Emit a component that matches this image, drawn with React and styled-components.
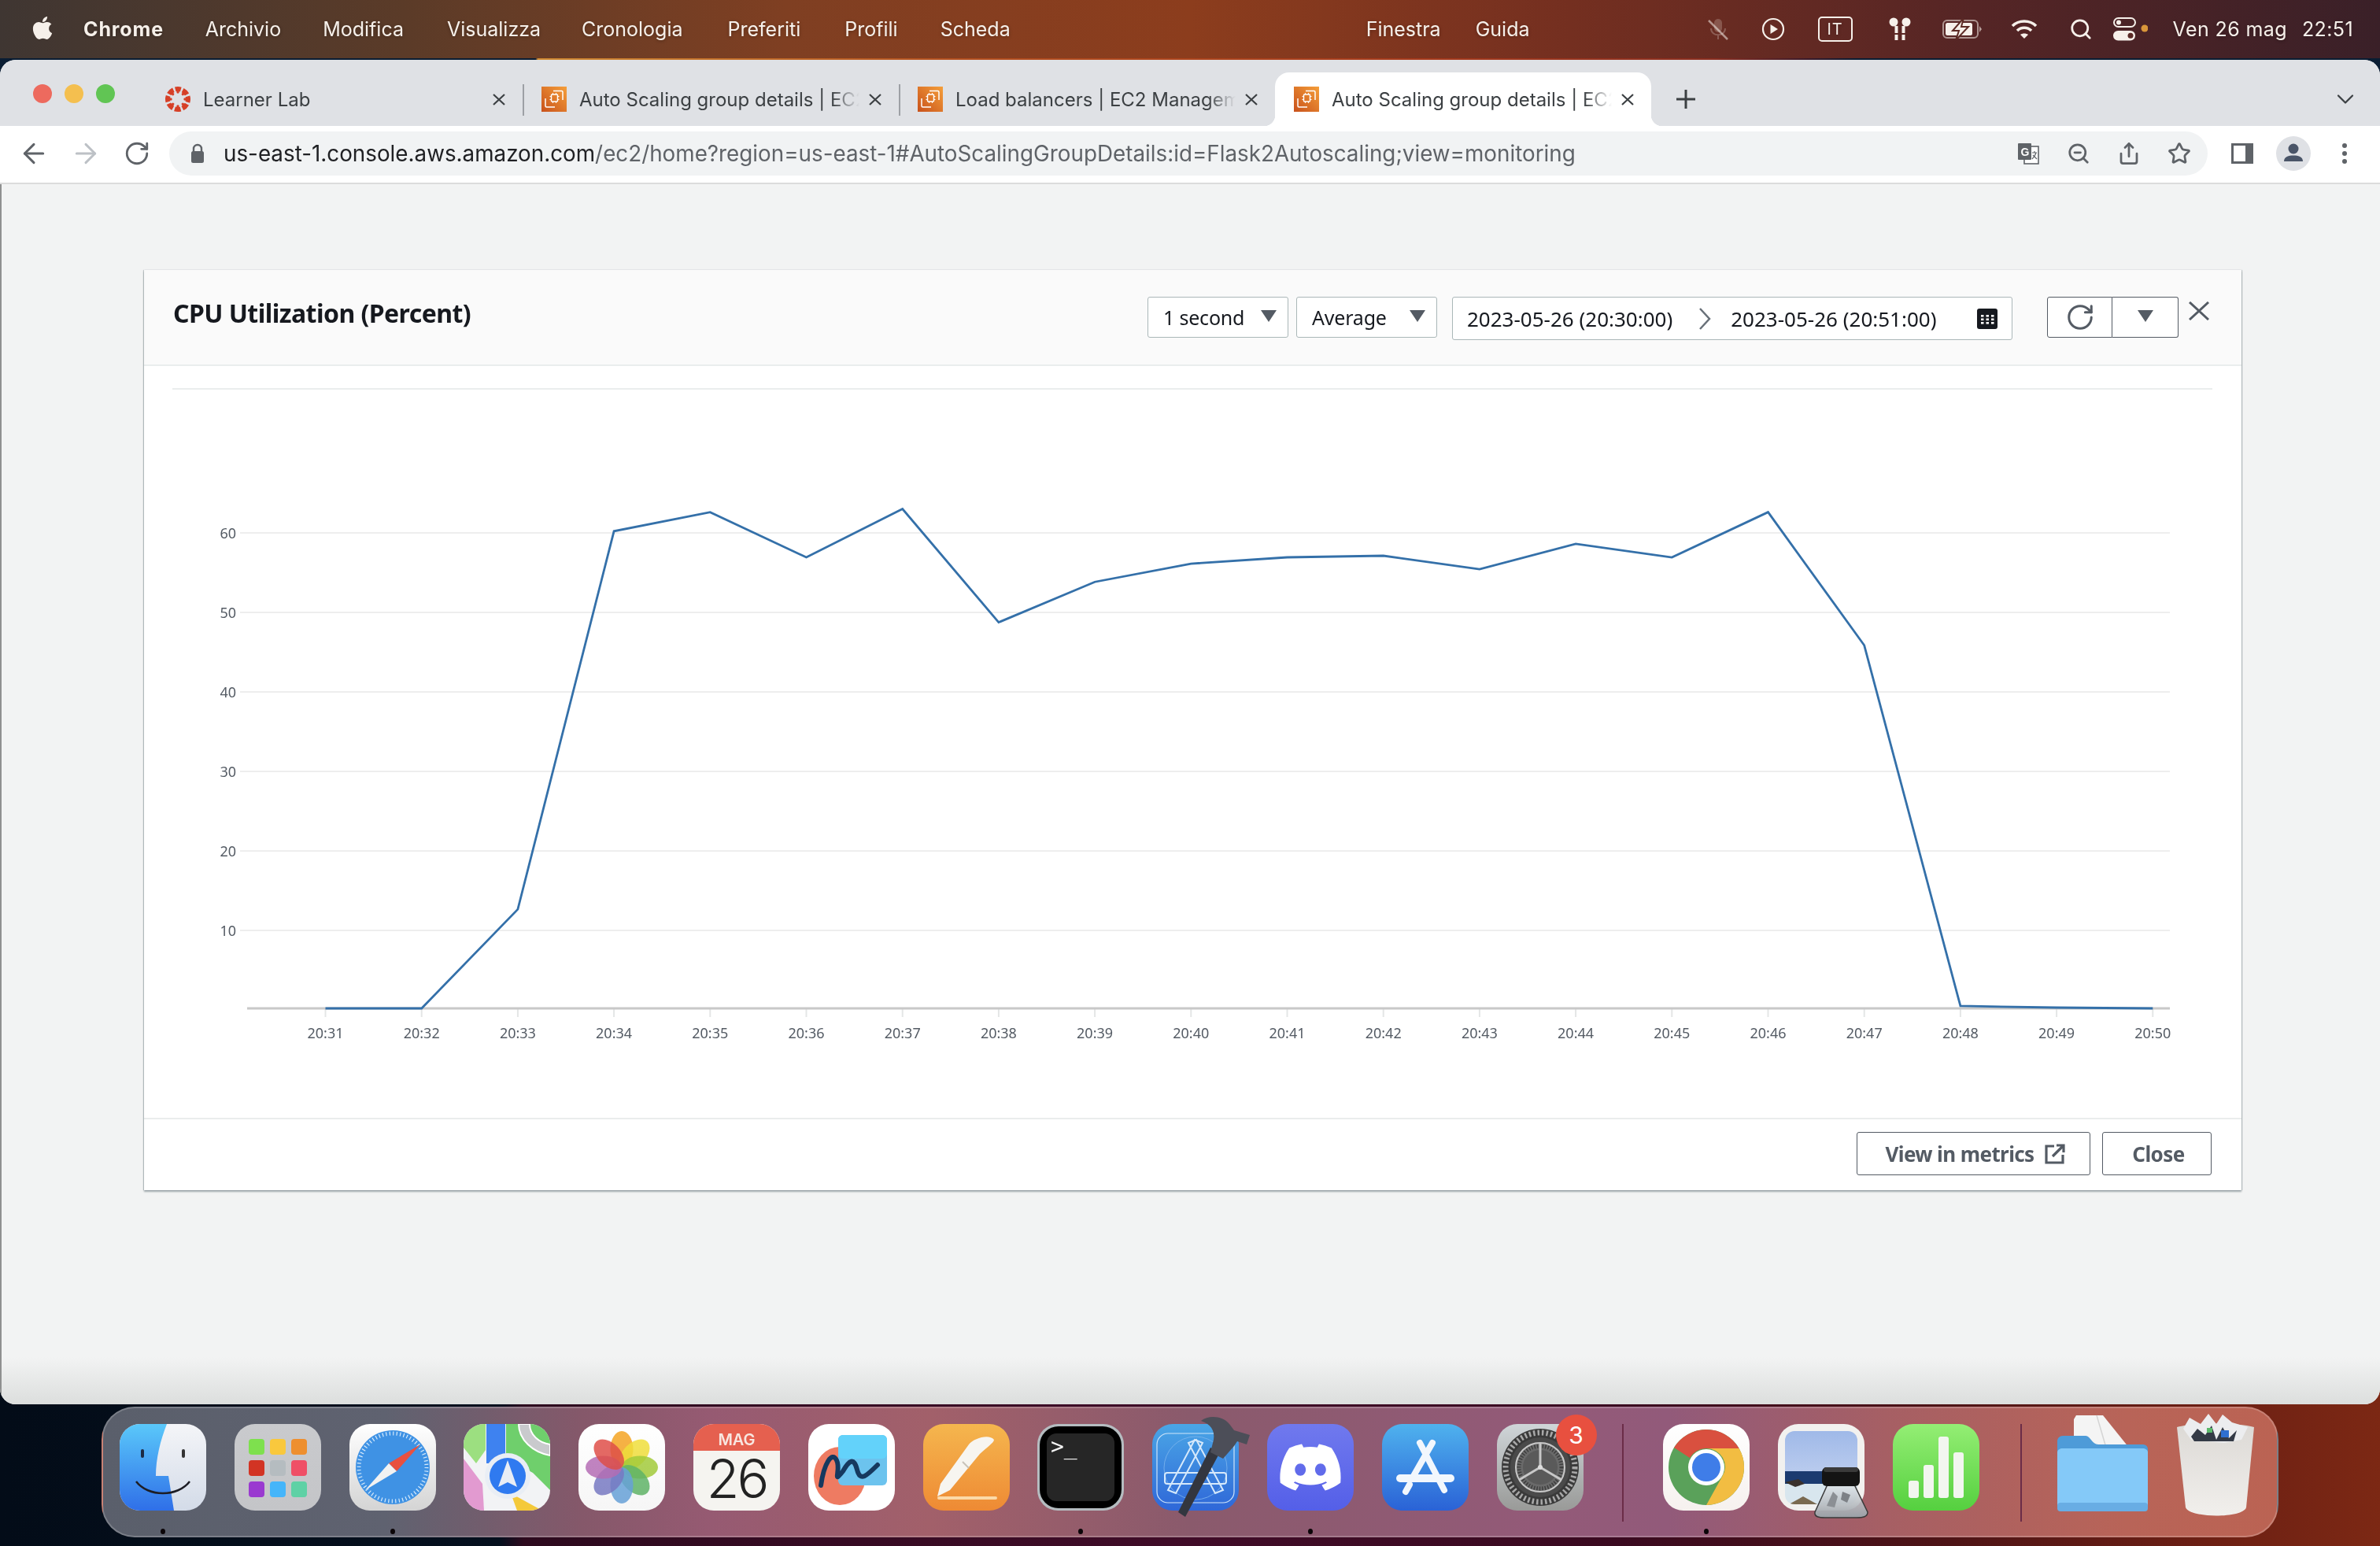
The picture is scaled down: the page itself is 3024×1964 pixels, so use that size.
import React from 'react';
import styled, { createGlobalStyle } from 'styled-components';
import { ArrowLeft, ArrowRight, RotateCw, ZoomOut, Share, Star, ChevronDown, Search } from 'lucide-react';
import { FaApple, FaDiscord } from 'react-icons/fa';

const MENU = [
  ['Archivio', 53], ['Modifica', 55], ['Visualizza', 52], ['Cronologia', 57], ['Preferiti', 56], ['Profili', 54], ['Scheda', 0],
];
const TABS = [
  { title: 'Learner Lab', icon: 'canvas' },
  { title: 'Auto Scaling group details | EC2 Management Console', icon: 'aws', sep: true },
  { title: 'Load balancers | EC2 Management Console', icon: 'aws', sep: true },
  { title: 'Auto Scaling group details | EC2 Management Console', icon: 'aws', active: true },
];
const TIMES = ['20:31', '20:32', '20:33', '20:34', '20:35', '20:36', '20:37', '20:38', '20:39', '20:40', '20:41', '20:42', '20:43', '20:44', '20:45', '20:46', '20:47', '20:48', '20:49', '20:50'];
const CPU = [0, 0, 12.5, 60.2, 62.6, 56.9, 63, 48.7, 53.8, 56.1, 56.9, 57.1, 55.4, 58.6, 56.9, 62.6, 45.8, 0.3, 0.1, 0];
const xAt = (i) => 413.5 + i * 122.2;
const gridY = (v) => 1283 - v * 10.1;
const lineY = (v) => 1281 - v * 10.07;

const Global = createGlobalStyle`
  html, body { margin: 0; padding: 0; }
  body { font-family: "Noto Sans", sans-serif; }
  * { box-sizing: border-box; }
`;

const Desktop = styled.div`
  width: 3024px;
  height: 1964px;
  overflow: hidden;
  background:
    linear-gradient(#0a1d33 0 200px, transparent 200px),
    linear-gradient(90deg, #030c18 0, #05101e 21%, #2d0a1e 22%, #400c28 50%, #3a0a20 68%, #4e1416 82%, #6d2014 93%, #7c2814 100%);
`;

const MenuBar = styled.div`
  height: 74px;
  display: flex;
  align-items: center;
  padding: 0 34px 0 40px;
  color: #f6f0ea;
  font-family: Inter, sans-serif;
  font-size: 25px;
  text-shadow: 0 1px 4px rgba(0, 0, 0, .3);
  background: linear-gradient(90deg, #3f3632 0, #5b3b28 17%, #7f3f22 33%, #8c3d1d 50%, #742f20 66%, #552525 83%, #3a2028 100%);
`;
const AppleSlot = styled.div`
  width: 28px;
  margin-right: 38px;
  display: flex;
  font-size: 33px;
  margin-top: -4px;
`;
const MenuApp = styled.span`
  font-weight: 700;
  letter-spacing: .9px;
  margin-right: 52.6px;
`;
const MenuItem = styled.span`
  margin-right: ${(p) => p.$gap}px;
`;
const CenterMenu = styled.div`
  display: flex;
  gap: 44px;
  margin-left: 452px;
`;
const StatusArea = styled.div`
  margin-left: auto;
  display: flex;
  align-items: center;
`;
const StatusSlot = styled.div`
  width: ${(p) => p.$w}px;
  height: 74px;
  display: flex;
  align-items: center;
  justify-content: center;
`;
const InputBadge = styled.div`
  width: 44px;
  height: 32px;
  border: 2px solid #f6f0ea;
  border-radius: 5px;
  font-size: 20px;
  line-height: 28px;
  text-align: center;
  letter-spacing: 1px;
`;
const Clock = styled.div`
  display: flex;
  gap: 19px;
  margin-left: 22px;
  letter-spacing: .4px;
`;
const GlowLine = styled.div`
  height: 2px;
  background: linear-gradient(90deg, #0a1d33 0 22.5%, #d08a32 22.6%, #b4501f 40%, #a63a1c 60%, #8a2e20 72%, #3a1a2a 76%, #0a1d33 78%);
`;

const Window = styled.div`
  height: 1708px;
  border-radius: 20px;
  overflow: hidden;
  display: flex;
  flex-direction: column;
  background: #f2f3f3;
`;
const TabStrip = styled.div`
  height: 84px;
  flex: none;
  padding-top: 16px;
  display: flex;
  background: #dfe1e5;
`;
const Lights = styled.div`
  display: flex;
  gap: 16px;
  margin: 15px 40px 0 42px;
`;
const Light = styled.div`
  width: 24px;
  height: 24px;
  border-radius: 50%;
  background: ${(p) => p.$c};
`;
const Tab = styled.div`
  position: relative;
  width: 478px;
  height: 68px;
  display: flex;
  align-items: center;
  padding: 0 22px 0 24px;
  color: #3c4043;
  font-family: Inter, sans-serif;
  font-size: 24px;
  border-radius: 18px 18px 0 0;
  background: ${(p) => (p.$active ? '#fff' : 'transparent')};
  &::before {
    content: '';
    display: ${(p) => (p.$sep ? 'block' : 'none')};
    position: absolute;
    left: 0;
    top: 15px;
    width: 2px;
    height: 40px;
    background: #9da0a5;
  }
  &::after {
    content: '';
    display: ${(p) => (p.$active ? 'block' : 'none')};
    position: absolute;
    left: -14px;
    right: -14px;
    bottom: 0;
    height: 14px;
    background:
      radial-gradient(circle at 0 0, transparent 14px, #fff 14.5px) left bottom / 14px 14px no-repeat,
      radial-gradient(circle at 100% 0, transparent 14px, #fff 14.5px) right bottom / 14px 14px no-repeat;
  }
`;
const TabTitle = styled.div`
  flex: 1;
  min-width: 0;
  margin: 0 12px 0 16px;
  white-space: nowrap;
  overflow: hidden;
  mask-image: linear-gradient(90deg, #000 90%, transparent 100%);
`;
const TabClose = styled.div`
  width: 16px;
  flex: none;
  display: flex;
  color: #3c4043;
`;
const NewTab = styled.div`
  width: 24px;
  height: 68px;
  margin-left: 32px;
  display: flex;
  align-items: center;
  color: #3c4043;
`;
const TabMenu = styled.div`
  height: 68px;
  margin: 0 26px 0 auto;
  display: flex;
  align-items: center;
  color: #3c4043;
`;

const Toolbar = styled.div`
  height: 74px;
  flex: none;
  padding: 0 12px 2px 10px;
  display: flex;
  align-items: center;
  background: #fff;
  border-bottom: 2px solid #dcdcdc;
`;
const ToolSlot = styled.div`
  width: ${(p) => p.$w || 65}px;
  height: 56px;
  flex: none;
  display: flex;
  align-items: center;
  justify-content: center;
  color: ${(p) => (p.$off ? '#bdc1c6' : '#5f6368')};
`;
const Omnibox = styled.div`
  width: 2590px;
  height: 56px;
  flex: none;
  margin: 0 11px 0 9px;
  padding: 0 4px 0 26px;
  display: flex;
  align-items: center;
  border-radius: 28px;
  background: #f1f3f4;
`;
const Url = styled.div`
  margin-left: 23px;
  flex: 1;
  font-family: Inter, sans-serif;
  font-size: 27.8px;
  color: #5f6368;
  white-space: nowrap;
  b { font-weight: 400; color: #202124; }
`;

const Page = styled.div`
  flex: 1;
  padding: 109px 176px 0 183px;
  border-left: 2px solid #8f9090;
  background: linear-gradient(#f2f3f3 0 1490px, #dcdedd 100%);
`;
const Panel = styled.div`
  width: 2665px;
  height: 1169px;
  margin-left: -2px;
  display: flex;
  flex-direction: column;
  background: #fff;
  box-shadow: 0 2px 2px rgba(0, 28, 36, .35), 1px 0 1px rgba(0, 28, 36, .18), -1px 0 1px rgba(0, 28, 36, .18);
`;
const PanelHeader = styled.div`
  height: 122px;
  flex: none;
  padding: 34px 41px 0 37px;
  display: flex;
  justify-content: space-between;
  background: #fafafa;
  border-bottom: 2px solid #eaeded;
`;
const Title = styled.h2`
  margin: 0;
  font-size: 32px;
  line-height: 42px;
  font-weight: 700;
  letter-spacing: -.55px;
  color: #16191f;
`;
const Controls = styled.div`
  display: flex;
  align-items: flex-start;
`;
const Select = styled.div`
  width: 179px;
  height: 52px;
  margin-right: ${(p) => p.$mr}px;
  padding: 0 14px 0 19px;
  display: flex;
  align-items: center;
  justify-content: space-between;
  font-size: 25px;
  letter-spacing: -.2px;
  color: #16191f;
  background: #fff;
  border: 1.5px solid #aab7b8;
  border-radius: 3px;
`;
const Caret = styled.div`
  width: 0;
  height: 0;
  margin-top: -3px;
  border-left: 10px solid transparent;
  border-right: 10px solid transparent;
  border-top: 15px solid #545b64;
`;
const DateRange = styled.div`
  width: 712px;
  height: 55px;
  margin-right: 44px;
  padding: 0 18px;
  display: flex;
  align-items: center;
  font-size: 26px;
  color: #16191f;
  background: #fff;
  border: 1.5px solid #aab7b8;
  border-radius: 3px;
`;
const DateArrow = styled.div`
  width: 74px;
  padding-left: 8px;
  display: flex;
  justify-content: center;
  color: #687078;
`;
const CalendarSlot = styled.div`
  margin-left: auto;
  display: flex;
`;
const ButtonGroup = styled.div`
  display: flex;
  height: 52px;
`;
const GroupButton = styled.div`
  width: ${(p) => p.$w}px;
  display: flex;
  align-items: center;
  justify-content: center;
  color: #545b64;
  background: #fff;
  border: 1.5px solid #545b64;
  border-left-width: ${(p) => (p.$join ? 0 : 1.5)}px;
  border-radius: ${(p) => (p.$join ? '0 3px 3px 0' : '3px 0 0 3px')};
`;
const CloseIcon = styled.div`
  width: 26px;
  margin: 6px 0 0 13px;
  display: flex;
  color: #545b64;
`;
const PanelBody = styled.div`
  flex: 1;
  padding-top: 28px;
`;
const ChartRule = styled.div`
  height: 2px;
  margin: 0 37px 0 36px;
  background: #eaeded;
`;
const ChartSvg = styled.svg`
  display: block;
  text { font-family: "Noto Sans", sans-serif; font-size: 18px; fill: #545b64; }
`;
const PanelFooter = styled.div`
  height: 92px;
  flex: none;
  padding: 16px 38px 0 0;
  display: flex;
  justify-content: flex-end;
  gap: 15px;
  border-top: 2px solid #eaeded;
`;
const FooterButton = styled.div`
  width: ${(p) => p.$w}px;
  height: 55px;
  padding-left: 4px;
  display: flex;
  align-items: center;
  justify-content: center;
  gap: 13px;
  font-size: 26px;
  font-weight: 700;
  letter-spacing: -.6px;
  color: #545b64;
  background: #fff;
  border: 1.5px solid #545b64;
  border-radius: 3px;
`;

const Dock = styled.div`
  width: 2766px;
  height: 166px;
  margin: 3px auto 0;
  padding: 20px 0 0 21px;
  display: flex;
  gap: 35.8px;
  border-radius: 42px;
  border: 2px solid rgba(255, 255, 255, .2);
  background: linear-gradient(90deg, #5a5f6b 0, #5f6270 13%, #85586a 22%, #965a72 28%, #a2606a 38%, #8a5a6c 50%, #935a78 66%, #925a7a 72%, #a65f64 82%, #b86458 93%, #bb6353 100%);
`;
const DockItem = styled.div`
  position: relative;
  width: ${(p) => p.$w || 110}px;
  height: 110px;
  flex: none;
  svg { display: block; overflow: visible; }
`;
const RunningDot = styled.div`
  position: absolute;
  left: 50%;
  top: 133px;
  width: 6px;
  height: 7px;
  margin-left: -3px;
  border-radius: 50%;
  background: #0b0508;
`;
const DockBadge = styled.div`
  position: absolute;
  right: -17px;
  top: -12px;
  width: 52px;
  height: 52px;
  border-radius: 50%;
  font-family: Inter, sans-serif;
  font-size: 30px;
  line-height: 52px;
  text-align: center;
  color: #fff;
  background: #e8503f;
`;
const DockSeparator = styled.div`
  width: 2px;
  height: 124px;
  flex: none;
  margin: 0 ${(p) => p.$r}px 0 ${(p) => p.$l}px;
  background: #6b2c48;
`;
const DiscordTile = styled.div`
  width: 110px;
  height: 110px;
  border-radius: 26px;
  display: flex;
  align-items: center;
  justify-content: center;
  color: #fff;
  font-size: 84px;
  background: linear-gradient(#7079ee, #545fe8);
`;

const Tile = ({ id, from, to, children }) => (
  <svg width="110" height="110" viewBox="0 0 110 110">
    <defs>
      <linearGradient id={id} x1="0" y1="0" x2="0" y2="1">
        <stop offset="0" stopColor={from} />
        <stop offset="1" stopColor={to} />
      </linearGradient>
    </defs>
    <rect width="110" height="110" rx="26" fill={`url(#${id})`} />
    {children}
  </svg>
);

const Finder = () => (
  <svg width="110" height="110" viewBox="0 0 110 110">
    <defs>
      <linearGradient id="fb" x1="0" y1="0" x2="0" y2="1"><stop offset="0" stopColor="#5ac8fa" /><stop offset="1" stopColor="#2f6fe8" /></linearGradient>
      <linearGradient id="fw" x1="0" y1="0" x2="0" y2="1"><stop offset="0" stopColor="#f4f5f8" /><stop offset="1" stopColor="#d3dbe8" /></linearGradient>
      <clipPath id="fc"><rect width="110" height="110" rx="26" /></clipPath>
    </defs>
    <g clipPath="url(#fc)">
      <rect width="110" height="110" fill="url(#fw)" />
      <path d="M0 0H60C52 20 46 44 46 66H62L69 110H0Z" fill="url(#fb)" />
    </g>
    <rect x="27" y="32" width="4" height="11" rx="2" fill="#1c2a44" />
    <rect x="79" y="32" width="4" height="11" rx="2" fill="#333" />
    <path d="M21 73C36 93 74 93 89 73" fill="none" stroke="#1d1d24" strokeWidth="2.5" />
  </svg>
);

const Launchpad = () => {
  const colours = ['#7ee04e', '#f9c83d', '#ee8f2e', '#d23424', '#b5bcc0', '#ef4f66', '#9a3ad0', '#45b5fa', '#5fd1a5'];
  return (
    <Tile id="lp" from="#c9cacd" to="#c4c5c8">
      {colours.map((c, i) => (
        <rect key={c} x={18 + (i % 3) * 27} y={19 + Math.floor(i / 3) * 27} width="20" height="20" rx="4" fill={c} />
      ))}
    </Tile>
  );
};

const Safari = () => (
  <Tile id="sf" from="#ffffff" to="#d4d4d4">
    <circle cx="55" cy="55" r="47" fill="#3f92e4" />
    <circle cx="55" cy="55" r="43" fill="none" stroke="#d8ebfb" strokeWidth="5" strokeDasharray="1.2 3.3" />
    <path d="M90 26 50 50 60 60Z" fill="#e8503f" />
    <path d="M20 84 50 50 60 60Z" fill="#f2f2f2" />
  </Tile>
);

const Maps = () => (
  <svg width="110" height="110" viewBox="0 0 110 110">
    <defs><clipPath id="mc"><rect width="110" height="110" rx="26" /></clipPath></defs>
    <g clipPath="url(#mc)">
      <rect width="110" height="110" fill="#f2f3f5" />
      <path d="M0 0H28V33L16 50 0 30Z" fill="#9cdf80" />
      <path d="M54 0H110V84L88 62 54 44Z" fill="#6fcf6c" />
      <path d="M70 0C70 20 88 36 110 40V26C96 24 84 14 84 0Z" fill="#c9cacd" stroke="#fff" strokeWidth="2" />
      <path d="M0 44 24 76 26 110H6L0 108Z" fill="#e29ad0" />
      <path d="M60 88 68 110H100Z" fill="#f4c93a" />
      <rect x="29" y="0" width="24" height="50" fill="#3e82f0" />
      <circle cx="56" cy="66" r="29" fill="#e9eef5" />
      <circle cx="56" cy="66" r="23" fill="#2f7af0" />
      <path d="M56 46 68 80 56 74 44 80Z" fill="#e8edf5" />
    </g>
  </svg>
);

const Photos = () => {
  const petals = ['#f6a623', '#f2e03c', '#a6cf3c', '#62b96a', '#6aa6de', '#7a7cc8', '#b870b8', '#e2504a'];
  return (
    <Tile id="ph" from="#ffffff" to="#f6f6f6">
      <g style={{ mixBlendMode: 'multiply' }}>
        {petals.map((c, i) => (
          <ellipse key={c} cx="55" cy="32" rx="14.5" ry="23" fill={c} opacity=".85" transform={`rotate(${i * 45} 55 55)`} />
        ))}
      </g>
    </Tile>
  );
};

const CalendarApp = () => (
  <svg width="110" height="110" viewBox="0 0 110 110">
    <defs><clipPath id="cc"><rect width="110" height="110" rx="26" /></clipPath></defs>
    <g clipPath="url(#cc)">
      <rect width="110" height="110" fill="#f5f4f0" />
      <rect width="110" height="34" fill="#e5604f" />
    </g>
    <text x="55" y="27" textAnchor="middle" fontFamily="Inter, sans-serif" fontWeight="600" fontSize="20" fill="#f8e6e0">MAG</text>
    <text x="55" y="94" textAnchor="middle" fontFamily="Inter, sans-serif" fontWeight="300" fontSize="68" letterSpacing="-3" fill="#222">26</text>
  </svg>
);

const Freeform = () => (
  <Tile id="ff" from="#ffffff" to="#ffffff">
    <ellipse cx="40" cy="66" rx="33" ry="37" fill="#ee7b62" />
    <rect x="38" y="14" width="62" height="64" rx="6" fill="#6cc3ee" />
    <rect x="38" y="14" width="62" height="30" rx="6" fill="#63d2fa" />
    <path d="M16 78C20 50 30 34 36 46 42 58 30 78 44 60 52 46 58 42 62 58 66 74 74 66 88 52" fill="none" stroke="#16395f" strokeWidth="6" strokeLinecap="round" />
  </Tile>
);

const Pages = () => (
  <Tile id="pg" from="#f5b64e" to="#ee8a34">
    <rect x="18" y="92" width="76" height="4" rx="2" fill="#fbd9a8" />
    <path d="M18 92 22 76 58 26C64 18 84 12 90 20 90 24 78 32 72 38L34 84Z" fill="#f7f5f0" />
    <path d="M50 48 58 56" stroke="#c8c2b8" strokeWidth="2" />
  </Tile>
);

const Terminal = () => (
  <svg width="110" height="110" viewBox="0 0 110 110">
    <rect width="110" height="110" rx="26" fill="#b5bcc0" />
    <rect x="3" y="3" width="104" height="104" rx="24" fill="#000" />
    <rect x="12" y="12" width="86" height="86" rx="12" fill="#262626" />
    <text x="17" y="38" fontFamily="'DejaVu Sans Mono', monospace" fontSize="28" fill="#f4f4f4">&gt;_</text>
  </svg>
);

const Xcode = () => (
  <Tile id="xc" from="#4aa6e6" to="#2f67d8">
    <rect x="6" y="12" width="98" height="88" rx="14" fill="none" stroke="#cfe5fa" strokeWidth="1.2" />
    <circle cx="55" cy="56" r="40" fill="none" stroke="#7fb6ee" strokeWidth=".8" />
    <g fill="none" stroke="#d6e9fb" strokeWidth="2">
      <path d="M46 24 56 20 90 84 80 88Z" />
      <path d="M64 24 54 20 20 84 30 88Z" />
      <rect x="16" y="62" width="78" height="14" rx="3" />
    </g>
    <path d="M33 112 42 118 86 36 74 30Z" fill="#33363f" />
    <path d="M62 -4C72 -12 90 -10 98 0L104 8 124 14 120 26 108 22 104 28 90 44 74 36 78 20C80 8 74 0 62 -4Z" fill="#4c4e58" />
  </Tile>
);

const AppStore = () => (
  <Tile id="as" from="#4fb2ee" to="#2a62d6">
    <g stroke="#f2f7fd" strokeLinecap="round" fill="none">
      <path d="M48 24 79 84" strokeWidth="8" />
      <path d="M64 24 40 66" strokeWidth="8" />
      <path d="M23 69H87" strokeWidth="10" />
      <path d="M30 86 35 77" strokeWidth="8" />
    </g>
  </Tile>
);

const SystemSettings = () => (
  <Tile id="ss" from="#cfd5d8" to="#999a98">
    <circle cx="55" cy="55" r="49" fill="#3a3a3a" />
    <circle cx="55" cy="55" r="44" fill="none" stroke="#a8a8a8" strokeWidth="7" strokeDasharray="2.500 3" />
    <circle cx="55" cy="55" r="38" fill="#4a4a4a" />
    <circle cx="55" cy="55" r="32" fill="#6a6a6a" />
    <circle cx="55" cy="55" r="27" fill="none" stroke="#3e3e3e" strokeWidth="5" strokeDasharray="1.500 2" />
    <circle cx="55" cy="55" r="22" fill="#5a5a5a" />
    <g stroke="#c8c8c8" strokeWidth="3">
      <circle cx="55" cy="55" r="31" fill="none" strokeWidth="2" />
      <path d="M55 55V24" />
      <path d="M55 55 82 71" />
      <path d="M55 55 28 71" />
    </g>
    <circle cx="55" cy="55" r="3" fill="#ddd" />
  </Tile>
);

const ChromeApp = () => (
  <Tile id="ch" from="#ffffff" to="#f6f1ee">
    <circle cx="55" cy="55" r="48" fill="#5aa15a" />
    <path d="M55 7A48 48 0 0 1 96.600 31H55A24 24 0 0 0 34 43L14 30A48 48 0 0 1 55 7Z" fill="#d9503f" />
    <path d="M96.600 31A48 48 0 0 1 55 103L75 67A24 24 0 0 0 76 43 24 24 0 0 0 55 31Z" fill="#f2bd42" />
    <circle cx="55" cy="55" r="23" fill="#fff" />
    <circle cx="55" cy="55" r="18" fill="#3f7de8" />
  </Tile>
);

const Preview = () => (
  <svg width="110" height="110" viewBox="0 0 110 110">
    <defs>
      <clipPath id="pc"><rect x="9" y="9" width="92" height="93" rx="12" /></clipPath>
      <linearGradient id="pv" x1="0" y1="0" x2="0" y2="1"><stop offset="0" stopColor="#dfe3e6" stopOpacity=".7" /><stop offset="1" stopColor="#9aa0a6" /></linearGradient>
      <linearGradient id="ps" x1="0" y1="0" x2="0" y2="1"><stop offset="0" stopColor="#9fb9e8" /><stop offset="1" stopColor="#b9cbee" /></linearGradient>
    </defs>
    <rect width="110" height="110" rx="26" fill="#f2f1ef" />
    <g clipPath="url(#pc)">
      <rect x="9" y="9" width="92" height="52" fill="url(#ps)" />
      <rect x="9" y="60" width="92" height="16" fill="#1b3b70" />
      <rect x="9" y="76" width="92" height="26" fill="#d8e6ee" />
      <path d="M9 74 26 70 34 76 22 80Z" fill="#39312c" />
      <path d="M14 102 32 92 50 102Z" fill="#7a6a50" />
    </g>
    <path d="M63 77H97L114 112C114 118 108 119 100 119H60C52 119 46 118 47 112Z" fill="url(#pv)" stroke="#3a3a3a" strokeWidth="1.500" />
    <path d="M62 104 70 86 76 92 72 106Z" fill="#8b8f94" />
    <path d="M82 86 92 90 88 100 80 96Z" fill="#7d8186" />
    <rect x="56" y="55" width="48" height="24" rx="6" fill="#141414" />
    <rect x="58" y="55" width="44" height="6" rx="3" fill="#3a3a3a" />
  </svg>
);

const Numbers = () => (
  <Tile id="nu" from="#94ee74" to="#55d03f">
    <rect x="20" y="72" width="13" height="22" rx="3" fill="#f2f6ef" />
    <rect x="39" y="52" width="13" height="42" rx="3" fill="#f2f6ef" />
    <rect x="58" y="16" width="13" height="78" rx="3" fill="#f2f6ef" />
    <rect x="77" y="36" width="13" height="58" rx="3" fill="#f2f6ef" />
  </Tile>
);

const Folder = () => (
  <svg width="115" height="110" viewBox="0 0 115 110">
    <path d="M21 -6 24 -11H58L91 30V40H21Z" fill="#f4f4f4" />
    <path d="M50 -11 62 30" stroke="#d4d4d4" strokeWidth="1.500" />
    <path d="M0 22C0 18 3 15 7 15H36C42 15 44 26 52 26H108C112 26 115 28 115 32V104C115 108 112 111 108 111H8C4 111 0 108 0 104Z" fill="#4e9bd8" />
    <path d="M0 36C0 33 3 31 7 31H108C112 31 115 33 115 36V104C115 108 112 111 108 111H8C4 111 0 108 0 104Z" fill="#84c9f8" />
    <rect y="100" width="115" height="11" rx="4" fill="#68ade4" />
  </svg>
);

const Trash = () => (
  <svg width="100" height="110" viewBox="0 0 100 110">
    <defs>
      <linearGradient id="tr" x1="0" y1="0" x2="0" y2="1"><stop offset="0" stopColor="#dcd9d5" /><stop offset="1" stopColor="#f1efec" /></linearGradient>
    </defs>
    <path d="M0 4C20 -2 78 -2 98 4L88 106C84 120 16 120 11 106Z" fill="url(#tr)" />
    <path d="M8 6 16 -8 30 0 40 -13 50 0 58 -12 70 -2 90 4 82 20 60 24 18 20Z" fill="#ecedef" />
    <path d="M18 16 26 6 36 14 44 2 50 20 58 4 66 18 76 8 72 22H22Z" fill="#343a46" />
    <rect x="56" y="8" width="10" height="9" fill="#2f6fd0" />
    <rect x="38" y="5" width="7" height="6" fill="#5ab86a" />
  </svg>
);

const AwsFavicon = () => (
  <svg width="32" height="32" viewBox="0 0 32 32">
    <defs>
      <linearGradient id="aw" x1="0" y1="1" x2="1" y2="0"><stop offset="0" stopColor="#c8511b" /><stop offset="1" stopColor="#f59f3a" /></linearGradient>
    </defs>
    <rect width="32" height="32" fill="url(#aw)" />
    <g fill="none" stroke="#fff" strokeWidth="1.500">
      <rect x="12.500" y="10" width="8" height="9" rx="1" />
      <path d="M15 5.500H25.500A1.500 1.500 0 0 1 27 7V17M17 26H6.500A1.500 1.500 0 0 1 5 24.500V15" />
      <path d="M14.500 8V10M18.500 8V10M14.500 19V21M18.500 19V21M10.500 12.500H12.500M10.500 16.500H12.500M20.500 12.500H22.500M20.500 16.500H22.500" strokeWidth="1" />
    </g>
  </svg>
);

const CanvasFavicon = () => (
  <svg width="32" height="32" viewBox="0 0 32 32" fill="#d64027">
    <circle cx="16" cy="16" r="13" fill="none" stroke="#d64027" strokeWidth="6" strokeDasharray="7.700 2.510" strokeDashoffset="3.850" transform="rotate(-90 16 16)" />
    {[0, 45, 90, 135, 180, 225, 270, 315].map((a) => (
      <circle key={a} cx="16" cy="7" r="1.700" transform={`rotate(${a} 16 16)`} />
    ))}
  </svg>
);

const Cross = ({ w, h, weight }) => (
  <svg width={w} height={h} viewBox={`0 0 ${w} ${h}`} fill="none" stroke="currentColor" strokeWidth={weight}>
    <path d={`M1 1 ${w - 1} ${h - 1}M${w - 1} 1 1 ${h - 1}`} />
  </svg>
);

const PlusIcon = () => (
  <svg width="24" height="24" viewBox="0 0 24 24" stroke="currentColor" strokeWidth="3">
    <path d="M12 0V24M0 12H24" />
  </svg>
);

const StatusIcons = {
  Mute: () => (
    <svg width="26" height="28" viewBox="0 0 26 28" fill="none">
      <rect x="8" y="1" width="10" height="17" rx="5" fill="#f6f0ea" opacity=".22" />
      <path d="M4 13C4 24 22 24 22 13M13 22V27" stroke="#f6f0ea" strokeOpacity=".25" strokeWidth="2" />
      <path d="M1 3 25 27" stroke="#f6f0ea" strokeOpacity=".55" strokeWidth="2.500" />
    </svg>
  ),
  Play: () => (
    <svg width="30" height="30" viewBox="0 0 30 30">
      <circle cx="15" cy="15" r="13" fill="none" stroke="#f6f0ea" strokeWidth="2.200" />
      <path d="M11.500 9 21 15 11.500 21Z" fill="#f6f0ea" />
    </svg>
  ),
  Pods: () => (
    <svg width="28" height="30" viewBox="0 0 28 30" fill="#f6f0ea">
      <circle cx="6" cy="6" r="5.500" /><circle cx="22" cy="6" r="5.500" />
      <rect x="7.500" y="11" width="4" height="9" /><rect x="16.500" y="11" width="4" height="9" />
      <rect x="7.500" y="22" width="4" height="7" /><rect x="16.500" y="22" width="4" height="7" />
    </svg>
  ),
  Battery: () => (
    <svg width="50" height="26" viewBox="0 0 50 26">
      <rect x="1" y="2" width="44" height="22" rx="5" fill="none" stroke="#f6f0ea" strokeOpacity=".55" strokeWidth="2" />
      <rect x="4" y="5" width="34" height="16" rx="2.500" fill="#f6f0ea" />
      <path d="M27 -1 13 15H21L17 27 33 10H24Z" fill="#f6f0ea" stroke="#5c2a24" strokeWidth="2" />
      <path d="M47 9 50 13 47 17Z" fill="#f6f0ea" fillOpacity=".6" />
    </svg>
  ),
  Wifi: () => (
    <svg width="34" height="26" viewBox="0 0 34 26" fill="none" stroke="#f6f0ea" strokeWidth="3.600">
      <path d="M2 9C10 1 24 1 32 9" />
      <path d="M8 15C13 10 21 10 26 15" />
      <path d="M17 25 12 20C15 18 19 18 22 20Z" fill="#f6f0ea" stroke="none" />
    </svg>
  ),
  Control: () => (
    <svg width="44" height="30" viewBox="0 0 44 30">
      <rect x="1" y="1" width="27" height="11" rx="5.500" fill="none" stroke="#f6f0ea" strokeWidth="2" />
      <circle cx="7" cy="6.500" r="3" fill="#f6f0ea" />
      <rect x="0" y="17" width="28" height="12.500" rx="6.200" fill="#f6f0ea" />
      <circle cx="22" cy="23.200" r="3.500" fill="#5a2a26" />
      <circle cx="40" cy="14" r="4.500" fill="#d9963a" />
    </svg>
  ),
};

const Translate = () => (
  <svg width="30" height="30" viewBox="0 0 30 30">
    <rect x="10" y="6" width="18" height="22" fill="#fff" stroke="#5f6368" strokeWidth="1.600" />
    <rect x="2" y="2" width="17" height="21" rx="1" fill="#5f6368" />
    <text x="5.500" y="18" fontFamily="'Liberation Sans', sans-serif" fontWeight="700" fontSize="14" fill="#fff">G</text>
    <path d="M20 14H26M23 12V14M25 14C24 18 22 20 20 22M21 17 26 22" stroke="#5f6368" strokeWidth="1.200" fill="none" />
  </svg>
);

const SidePanel = () => (
  <svg width="28" height="28" viewBox="0 0 28 28">
    <path fillRule="evenodd" d="M0 1H28V27H0ZM3 4V24H18V4Z" fill="#5f6368" />
  </svg>
);

const Avatar = () => (
  <svg width="44" height="44" viewBox="0 0 44 44">
    <circle cx="22" cy="22" r="22" fill="#dfe1e5" />
    <circle cx="22" cy="16" r="6.500" fill="#4a5568" />
    <path d="M10 32C10 26 16 24.500 22 24.500S34 26 34 32Z" fill="#4a5568" />
  </svg>
);

const Kebab = () => (
  <svg width="8" height="28" viewBox="0 0 8 28" fill="#5f6368">
    <circle cx="4" cy="4" r="3" /><circle cx="4" cy="14" r="3" /><circle cx="4" cy="24" r="3" />
  </svg>
);

const LockIcon = () => (
  <svg width="20" height="26" viewBox="0 0 20 26">
    <path d="M5 11V7A5 5 0 0 1 15 7V11" fill="none" stroke="#5f6368" strokeWidth="2.400" />
    <rect x="2" y="10" width="16" height="15" rx="2.500" fill="#5f6368" />
  </svg>
);

const CalendarIcon = () => (
  <svg width="26" height="26" viewBox="0 0 26 26">
    <rect width="26" height="26" rx="3" fill="#16191f" />
    <g fill="#fff">
      {[8, 12.5, 17].map((y) => [5, 11.5, 18].map((x) => <rect key={`${x}${y}`} x={x} y={y} width="3.500" height="2.600" />))}
    </g>
  </svg>
);

const ExternalIcon = () => (
  <svg width="26" height="26" viewBox="0 0 26 26" fill="none" stroke="#545b64" strokeWidth="3.200">
    <path d="M12 3H2V24H23V14" />
    <path d="M10 16 23 3M15 2H24V11" />
  </svg>
);

const CpuChart = () => (
  <ChartSvg width="2665" height="923" viewBox="183 495 2665 923">
    {[10, 20, 30, 40, 50, 60].map((v) => (
      <g key={v}>
        <line x1="305" x2="2757" y1={gridY(v)} y2={gridY(v)} stroke="#eeeeee" strokeWidth="2" />
        <text x="300" y={gridY(v) + 6.500} textAnchor="end">{v}</text>
      </g>
    ))}
    {TIMES.map((t, i) => (
      <g key={t}>
        <line x1={xAt(i)} x2={xAt(i)} y1="1281" y2="1292" stroke="#e4e6e6" strokeWidth="2" />
        <text x={xAt(i)} y="1319" textAnchor="middle">{t}</text>
      </g>
    ))}
    <line x1="314" x2="2757" y1="1281" y2="1281" stroke="#c8c8c8" strokeWidth="3" />
    <polyline
      fill="none"
      stroke="#3470a9"
      strokeWidth="2.800"
      points={CPU.map((v, i) => `${xAt(i)},${lineY(v)}`).join(' ')}
    />
  </ChartSvg>
);

export default function App() {
  return (
    <Desktop>
      <Global />
      <MenuBar>
        <AppleSlot><FaApple /></AppleSlot>
        <MenuApp>Chrome</MenuApp>
        {MENU.map(([label, gap]) => <MenuItem key={label} $gap={gap}>{label}</MenuItem>)}
        <CenterMenu>
          <span>Finestra</span>
          <span>Guida</span>
        </CenterMenu>
        <StatusArea>
          <StatusSlot $w={66}><StatusIcons.Mute /></StatusSlot>
          <StatusSlot $w={74}><StatusIcons.Play /></StatusSlot>
          <StatusSlot $w={84}><InputBadge>IT</InputBadge></StatusSlot>
          <StatusSlot $w={81}><StatusIcons.Pods /></StatusSlot>
          <StatusSlot $w={76}><StatusIcons.Battery /></StatusSlot>
          <StatusSlot $w={82}><StatusIcons.Wifi /></StatusSlot>
          <StatusSlot $w={63}><Search size={30} strokeWidth={2.2} /></StatusSlot>
          <StatusSlot $w={63}><StatusIcons.Control /></StatusSlot>
          <Clock><span>Ven 26 mag</span><span>22:51</span></Clock>
        </StatusArea>
      </MenuBar>
      <GlowLine />
      <Window>
        <TabStrip>
          <Lights>
            <Light $c="#ed6a5e" />
            <Light $c="#f4bf4f" />
            <Light $c="#61c554" />
          </Lights>
          {TABS.map((t, i) => (
            <Tab key={i} $active={t.active} $sep={t.sep}>
              {t.icon === 'aws' ? <AwsFavicon /> : <CanvasFavicon />}
              <TabTitle>{t.title}</TabTitle>
              <TabClose><Cross w={16} h={15} weight={2.2} /></TabClose>
            </Tab>
          ))}
          <NewTab><PlusIcon /></NewTab>
          <TabMenu><ChevronDown size={36} strokeWidth={1.5} /></TabMenu>
        </TabStrip>
        <Toolbar>
          <ToolSlot $w={66}><ArrowLeft size={40} strokeWidth={1.8} /></ToolSlot>
          <ToolSlot $w={66} $off><ArrowRight size={40} strokeWidth={1.8} /></ToolSlot>
          <ToolSlot $w={64}><RotateCw size={34} strokeWidth={2} /></ToolSlot>
          <Omnibox>
            <LockIcon />
            <Url><b>us-east-1.console.aws.amazon.com</b>/ec2/home?region=us-east-1#AutoScalingGroupDetails:id=Flask2Autoscaling;view=monitoring</Url>
            <ToolSlot $w={64}><Translate /></ToolSlot>
            <ToolSlot $w={64}><ZoomOut size={30} strokeWidth={2.2} /></ToolSlot>
            <ToolSlot $w={64}><Share size={30} strokeWidth={2.2} /></ToolSlot>
            <ToolSlot $w={64}><Star size={30} strokeWidth={2.2} /></ToolSlot>
          </Omnibox>
          <ToolSlot><SidePanel /></ToolSlot>
          <ToolSlot><Avatar /></ToolSlot>
          <ToolSlot><Kebab /></ToolSlot>
        </Toolbar>
        <Page>
          <Panel>
            <PanelHeader>
              <Title>CPU Utilization (Percent)</Title>
              <Controls>
                <Select $mr={10}>1 second<Caret /></Select>
                <Select $mr={19}>Average<Caret /></Select>
                <DateRange>
                  <span>2023-05-26 (20:30:00)</span>
                  <DateArrow>
                    <svg width="16" height="28" viewBox="0 0 16 28" fill="none" stroke="currentColor" strokeWidth="2.500"><path d="M2 1 14 14 2 27" /></svg>
                  </DateArrow>
                  <span>2023-05-26 (20:51:00)</span>
                  <CalendarSlot><CalendarIcon /></CalendarSlot>
                </DateRange>
                <ButtonGroup>
                  <GroupButton $w={83}><RotateCw size={38} strokeWidth={1.9} /></GroupButton>
                  <GroupButton $w={84} $join><Caret /></GroupButton>
                </ButtonGroup>
                <CloseIcon><Cross w={26} h={24} weight={3} /></CloseIcon>
              </Controls>
            </PanelHeader>
            <PanelBody>
              <ChartRule />
              <CpuChart />
            </PanelBody>
            <PanelFooter>
              <FooterButton $w={297}>View in metrics<ExternalIcon /></FooterButton>
              <FooterButton $w={139}>Close</FooterButton>
            </PanelFooter>
          </Panel>
        </Page>
      </Window>
      <Dock>
        <DockItem><Finder /><RunningDot /></DockItem>
        <DockItem><Launchpad /></DockItem>
        <DockItem><Safari /><RunningDot /></DockItem>
        <DockItem><Maps /></DockItem>
        <DockItem><Photos /></DockItem>
        <DockItem><CalendarApp /></DockItem>
        <DockItem><Freeform /></DockItem>
        <DockItem><Pages /></DockItem>
        <DockItem><Terminal /><RunningDot /></DockItem>
        <DockItem><Xcode /></DockItem>
        <DockItem><DiscordTile><FaDiscord /></DiscordTile><RunningDot /></DockItem>
        <DockItem><AppStore /></DockItem>
        <DockItem><SystemSettings /><DockBadge>3</DockBadge></DockItem>
        <DockSeparator $l={14} $r={14} />
        <DockItem><ChromeApp /><RunningDot /></DockItem>
        <DockItem><Preview /></DockItem>
        <DockItem><Numbers /></DockItem>
        <DockSeparator $l={16} $r={10} />
        <DockItem $w={116}><Folder /></DockItem>
        <DockItem $w={100}><Trash /></DockItem>
      </Dock>
    </Desktop>
  );
}
